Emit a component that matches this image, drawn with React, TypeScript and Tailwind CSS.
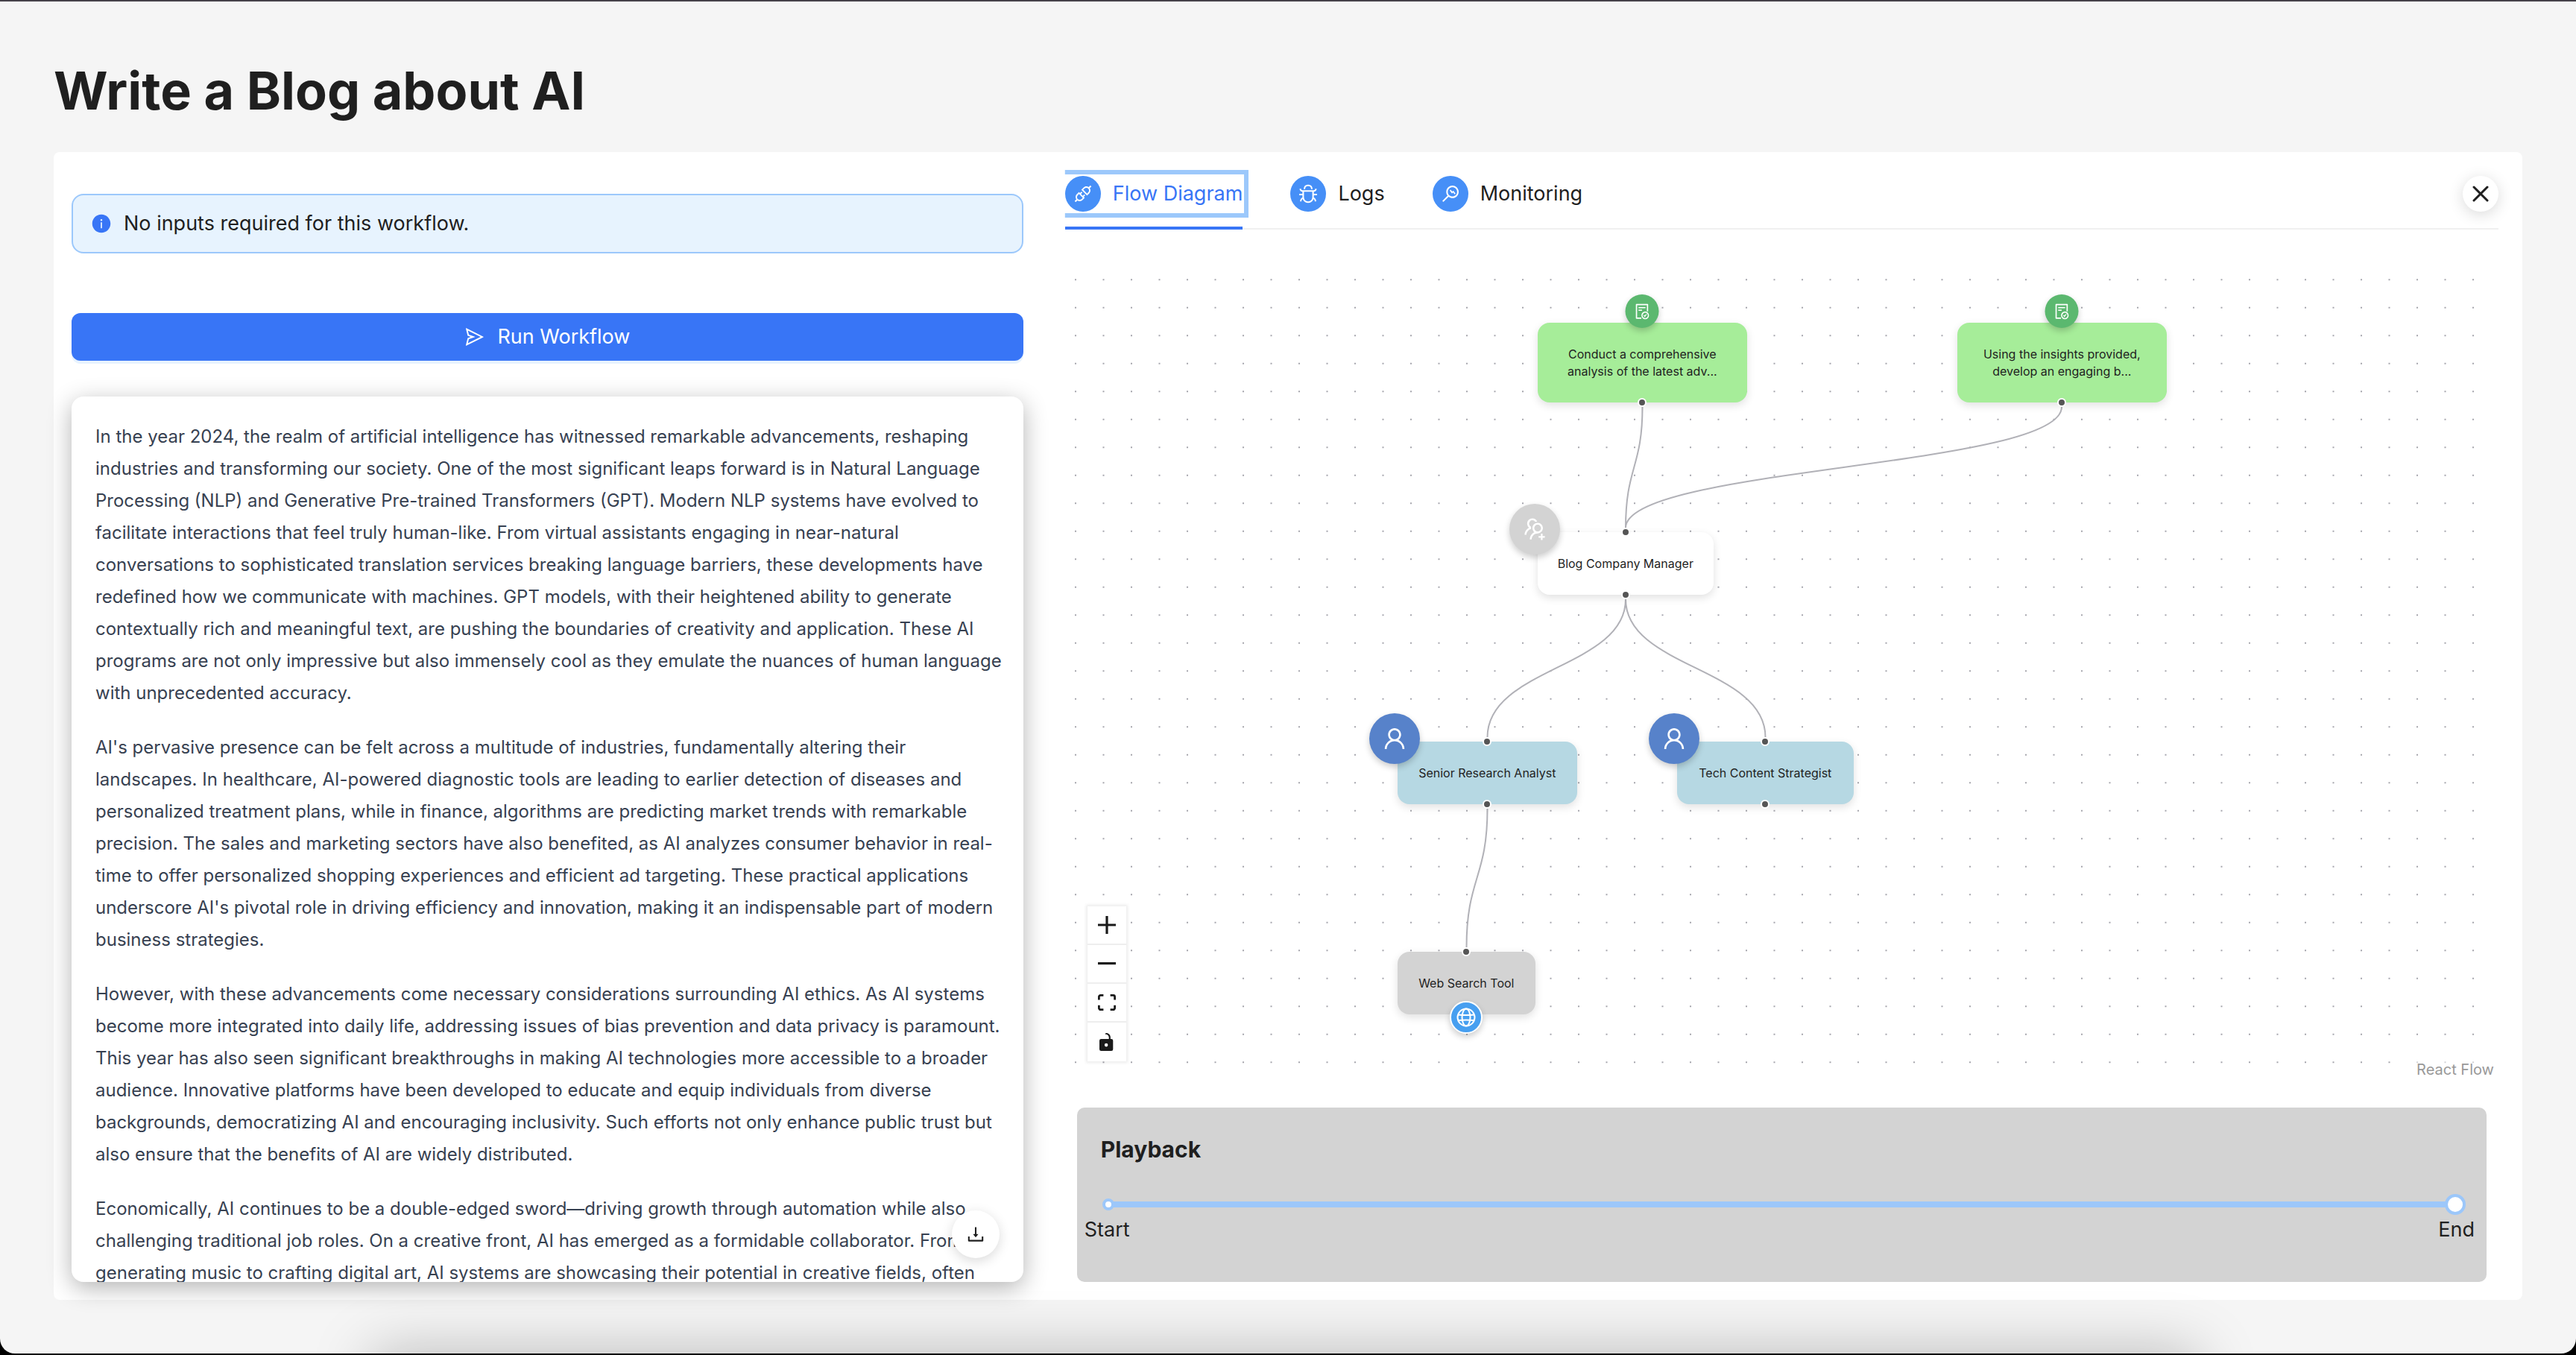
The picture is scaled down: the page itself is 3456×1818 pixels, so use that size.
import type { ComponentType, ReactNode } from "react";
import {
  AiFillInfoCircle,
  AiOutlineApi,
  AiOutlineBug,
  AiOutlineDownload,
  AiOutlineFileDone,
  AiOutlineMonitor,
  AiOutlineSend,
  AiOutlineUser,
  AiOutlineUsergroupAdd,
} from "react-icons/ai";

const paragraphs = [
  "In the year 2024, the realm of artificial intelligence has witnessed remarkable advancements, reshaping industries and transforming our society. One of the most significant leaps forward is in Natural Language Processing (NLP) and Generative Pre-trained Transformers (GPT). Modern NLP systems have evolved to facilitate interactions that feel truly human-like. From virtual assistants engaging in near-natural conversations to sophisticated translation services breaking language barriers, these developments have redefined how we communicate with machines. GPT models, with their heightened ability to generate contextually rich and meaningful text, are pushing the boundaries of creativity and application. These AI programs are not only impressive but also immensely cool as they emulate the nuances of human language with unprecedented accuracy.",
  "AI's pervasive presence can be felt across a multitude of industries, fundamentally altering their landscapes. In healthcare, AI-powered diagnostic tools are leading to earlier detection of diseases and personalized treatment plans, while in finance, algorithms are predicting market trends with remarkable precision. The sales and marketing sectors have also benefited, as AI analyzes consumer behavior in real-time to offer personalized shopping experiences and efficient ad targeting. These practical applications underscore AI's pivotal role in driving efficiency and innovation, making it an indispensable part of modern business strategies.",
  "However, with these advancements come necessary considerations surrounding AI ethics. As AI systems become more integrated into daily life, addressing issues of bias prevention and data privacy is paramount. This year has also seen significant breakthroughs in making AI technologies more accessible to a broader audience. Innovative platforms have been developed to educate and equip individuals from diverse backgrounds, democratizing AI and encouraging inclusivity. Such efforts not only enhance public trust but also ensure that the benefits of AI are widely distributed.",
  "Economically, AI continues to be a double-edged sword—driving growth through automation while also challenging traditional job roles. On a creative front, AI has emerged as a formidable collaborator. From generating music to crafting digital art, AI systems are showcasing their potential in creative fields, often",
];

type IconType = ComponentType<{ className?: string }>;

const tabs: { label: string; Icon: IconType; active: boolean }[] = [
  { label: "Flow Diagram", Icon: AiOutlineApi, active: true },
  { label: "Logs", Icon: AiOutlineBug, active: false },
  { label: "Monitoring", Icon: AiOutlineMonitor, active: false },
];

function Tab({ label, Icon, active }: { label: string; Icon: IconType; active: boolean }) {
  return (
    <button
      type="button"
      role="tab"
      aria-selected={active}
      className={
        active
          ? "relative flex items-center gap-4 text-[#3875f6] outline-[6px] outline-offset-2 outline-[#9cc8fb] after:absolute after:inset-x-0 after:-bottom-6 after:h-1 after:bg-[#3875f6]"
          : "relative flex items-center gap-4"
      }
    >
      <span className="flex size-12 items-center justify-center rounded-full bg-[#468ff7] text-white">
        <Icon className="size-7" />
      </span>
      {label}
    </button>
  );
}

function Handle({ className }: { className: string }) {
  return (
    <span
      className={`absolute left-1/2 size-3 -translate-x-1/2 rounded-full border-2 border-white bg-[#555] ${className}`}
    />
  );
}

function FlowNode({
  className,
  children,
  top,
  bottom,
}: {
  className: string;
  children: ReactNode;
  top?: boolean;
  bottom?: boolean;
}) {
  return (
    <div
      className={`absolute flex items-center justify-center rounded-2xl text-center text-[16px] leading-[23px] shadow-[0_4px_12px_rgba(0,0,0,0.12)] ${className}`}
    >
      {children}
      {top && <Handle className="-top-1.5" />}
      {bottom && <Handle className="-bottom-1.5" />}
    </div>
  );
}

const edges = [
  "M774.5 206 C774.5 287 752 287 752 368",
  "M1337 206 C1337 287 752 287 752 368",
  "M752 464 C752 556 566.5 556 566.5 649",
  "M752 464 C752 556 939.5 556 939.5 649",
  "M566.5 745 C566.5 838 538.5 838 538.5 931",
];

const badge = "absolute flex items-center justify-center rounded-full text-white shadow-[0_4px_8px_rgba(0,0,0,0.2)]";

function FlowCanvas() {
  return (
    <div className="relative mt-8 min-h-0 flex-1 overflow-hidden">
      <svg className="absolute inset-0 size-full" aria-hidden="true">
        <pattern id="dots" x="-4.75" y="16.5" width="37.5" height="37.5" patternUnits="userSpaceOnUse">
          <circle cx="18.75" cy="18.75" r="1.1" fill="#91919a" />
        </pattern>
        <rect width="100%" height="100%" fill="url(#dots)" />
        {edges.map((d) => (
          <path key={d} d={d} fill="none" stroke="#b1b1b7" strokeWidth="2" />
        ))}
      </svg>

      <FlowNode className="left-[634px] top-[93px] h-[107px] w-[281px] bg-[#a6ed99]" bottom>
        <span>
          Conduct a comprehensive
          <br />
          analysis of the latest adv...
        </span>
        <span className={`${badge} -top-[38px] left-1/2 size-[45px] -translate-x-1/2 bg-[#5bb86f]`}>
          <AiOutlineFileDone className="size-6" />
        </span>
      </FlowNode>
      <FlowNode className="left-[1197px] top-[93px] h-[107px] w-[281px] bg-[#a6ed99]" bottom>
        <span>
          Using the insights provided,
          <br />
          develop an engaging b...
        </span>
        <span className={`${badge} -top-[38px] left-1/2 size-[45px] -translate-x-1/2 bg-[#5bb86f]`}>
          <AiOutlineFileDone className="size-6" />
        </span>
      </FlowNode>

      <FlowNode className="left-[634px] top-[374px] h-[84px] w-[236px] bg-white" top bottom>
        Blog Company Manager
        <span className={`${badge} -left-[38px] -top-[38px] size-[68px] bg-[#d3d3d3]`}>
          <AiOutlineUsergroupAdd className="size-9" />
        </span>
      </FlowNode>

      <FlowNode className="left-[446px] top-[655px] h-[84px] w-[241px] bg-[#b6d8e3]" top bottom>
        Senior Research Analyst
        <span className={`${badge} -left-[38px] -top-[38px] size-[68px] bg-[#5782ca]`}>
          <AiOutlineUser className="size-9" />
        </span>
      </FlowNode>
      <FlowNode className="left-[821px] top-[655px] h-[84px] w-[237px] bg-[#b6d8e3]" top bottom>
        Tech Content Strategist
        <span className={`${badge} -left-[38px] -top-[38px] size-[68px] bg-[#5782ca]`}>
          <AiOutlineUser className="size-9" />
        </span>
      </FlowNode>

      <FlowNode className="left-[446px] top-[937px] h-[84px] w-[185px] bg-[#d3d3d3]" top>
        Web Search Tool
        <span className={`${badge} -bottom-[26px] left-1/2 size-11 -translate-x-1/2 border-2 border-white bg-[#479ff0]`}>
          <svg viewBox="0 0 26 26" className="size-[26px]" fill="none" stroke="currentColor" strokeWidth="2">
            <circle cx="13" cy="13" r="11.5" />
            <ellipse cx="13" cy="13" rx="5.5" ry="11.5" />
            <path d="M2 9.5Q13 10.5 24 9.5M2 17Q13 16 24 17" />
          </svg>
        </span>
      </FlowNode>

      <div className="absolute bottom-[30px] left-[30px] flex flex-col divide-y-2 divide-[#eee] bg-white shadow-[0_0_4px_2px_rgba(0,0,0,0.08)]">
        <button type="button" aria-label="Zoom in" className="flex size-13 items-center justify-center">
          <svg viewBox="0 0 32 32" className="size-6 fill-[#1a1a1a]">
            <path d="M32 18.133H18.133V32h-4.266V18.133H0v-4.266h13.867V0h4.266v13.867H32z" />
          </svg>
        </button>
        <button type="button" aria-label="Zoom out" className="flex size-13 items-center justify-center">
          <svg viewBox="0 0 32 5" className="w-6 fill-[#1a1a1a]">
            <path d="M0 0h32v4.2H0z" />
          </svg>
        </button>
        <button type="button" aria-label="Fit view" className="flex size-13 items-center justify-center">
          <svg viewBox="0 0 32 30" className="w-6 fill-[#1a1a1a]">
            <path d="M3.692 4.63c0-.53.4-.938.939-.938h5.215V0H4.708C2.13 0 0 2.054 0 4.63v5.216h3.692V4.631zM27.354 0h-5.2v3.692h5.17c.53 0 .984.4.984.939v5.215H32V4.631A4.624 4.624 0 0027.354 0zm.954 24.83c0 .532-.4.94-.939.94h-5.215v3.768h5.215c2.577 0 4.631-2.13 4.631-4.707v-5.139h-3.692v5.139zm-23.677.94c-.531 0-.939-.4-.939-.94v-5.138H0v5.139c0 2.577 2.13 4.707 4.708 4.707h5.138V25.77H4.631z" />
          </svg>
        </button>
        <button type="button" aria-label="Toggle interactivity" className="flex size-13 items-center justify-center">
          <svg viewBox="0 0 25 32" className="h-6 fill-[#1a1a1a]">
            <path d="M21.333 10.667H19.81V7.619C19.81 3.429 16.38 0 12.19 0c-4.114 1.828-1.37 2.133.305 2.438 1.676.305 4.42 2.59 4.42 5.181v3.048H3.047A3.056 3.056 0 000 13.714v15.238A3.056 3.056 0 003.048 32h18.285a3.056 3.056 0 003.048-3.048V13.714a3.056 3.056 0 00-3.048-3.047zM12.19 24.533a3.056 3.056 0 01-3.047-3.047 3.056 3.056 0 013.047-3.048 3.056 3.056 0 013.048 3.048 3.056 3.056 0 01-3.048 3.047z" />
          </svg>
        </button>
      </div>

      <a href="#react-flow" className="absolute bottom-0 right-0 bg-white/50 px-1.5 py-1 text-[20px] leading-[30px] text-[#999]">
        React Flow
      </a>
    </div>
  );
}

function Playback() {
  return (
    <section className="mx-4 mt-8 flex h-[234px] flex-col rounded-[10px] bg-[#d3d3d3] pt-9">
      <h2 className="px-8 text-[30px] font-bold leading-[40px]">Playback</h2>
      <div className="relative mx-[42px] mt-[50px] h-2 bg-[#9cc7fa]">
        <span className="absolute -left-2 -top-1 size-4 rounded-full border-4 border-[#9cc7fa] bg-white" />
        <input
          type="range"
          aria-label="Playback position"
          min={0}
          max={1}
          defaultValue={1}
          className="absolute -inset-x-[14px] -top-[10px] h-7 w-[calc(100%+28px)] appearance-none bg-transparent [&::-webkit-slider-thumb]:size-7 [&::-webkit-slider-thumb]:appearance-none [&::-webkit-slider-thumb]:rounded-full [&::-webkit-slider-thumb]:border-4 [&::-webkit-slider-thumb]:border-[#9cc7fa] [&::-webkit-slider-thumb]:bg-white"
        />
      </div>
      <div className="mt-3 flex justify-between pl-2.5 pr-4 leading-[36px]">
        <span>Start</span>
        <span>End</span>
      </div>
    </section>
  );
}

export default function App() {
  return (
    <div className="h-screen bg-black font-['Inter',sans-serif] text-[27px] text-[#1f1f1f]">
      <div className="relative flex h-[calc(100%-2px)] flex-col overflow-hidden rounded-b-[20px] border-t-2 border-[#454149] bg-[#f5f5f5] px-18 pb-18 pt-16">
        <h1 className="mb-[26px] text-[70px] font-bold leading-[112px]">Write a Blog about AI</h1>

        <main className="flex min-h-0 flex-1 rounded-lg bg-white">
          <section className="flex w-2/5 flex-col px-6 pb-6 pt-14">
            <div
              role="alert"
              className="flex h-20 items-center gap-4 rounded-2xl border-2 border-[#9cc8fb] bg-[#e7f3fe] px-6"
            >
              <AiFillInfoCircle className="size-7 text-[#3875f6]" />
              No inputs required for this workflow.
            </div>
            <button
              type="button"
              className="mt-20 flex h-16 items-center justify-center gap-4 rounded-xl bg-[#3875f6] text-white shadow-[0_4px_0_#e8f3fe]"
            >
              <AiOutlineSend className="size-7" />
              Run Workflow
            </button>
            <div className="relative mt-12 min-h-0 flex-1 overflow-hidden rounded-2xl shadow-[0_8px_32px_rgba(0,0,0,0.3)]">
              <div className="flex h-full flex-col gap-[30px] overflow-hidden py-8 pl-8 pr-6 text-[24px] leading-[43px] text-[#374151]">
                {paragraphs.map((text) => (
                  <p key={text.slice(0, 16)} className="shrink-0">
                    {text}
                  </p>
                ))}
              </div>
              <button
                type="button"
                aria-label="Download"
                className="absolute bottom-8 right-8 flex size-16 items-center justify-center rounded-full bg-white text-[#1f1f1f] shadow-[0_4px_16px_rgba(0,0,0,0.15)]"
              >
                <AiOutlineDownload className="size-7" />
              </button>
            </div>
          </section>

          <section className="flex w-3/5 flex-col px-8 pb-6">
            <div className="flex items-center border-b-2 border-[#f0f0f0] pb-[22px] pt-8">
              <div role="tablist" className="flex gap-16 [clip-path:inset(-20px_-20px_-24px_0)]">
                {tabs.map((tab) => (
                  <Tab key={tab.label} {...tab} />
                ))}
              </div>
              <button
                type="button"
                aria-label="Close"
                className="ml-auto flex size-12 items-center justify-center rounded-full bg-white shadow-[0_4px_20px_rgba(0,0,0,0.15)]"
              >
                <svg viewBox="0 0 24 24" className="size-6" fill="none" stroke="#1f1f1f" strokeWidth="3" strokeLinecap="round">
                  <path d="M3 3L21 21M21 3L3 21" />
                </svg>
              </button>
            </div>
            <FlowCanvas />
            <Playback />
          </section>
        </main>

        <div className="pointer-events-none absolute inset-x-0 bottom-0 flex h-30 items-end overflow-hidden pl-[620px] pr-[628px]">
          <div className="h-px w-full translate-y-[120px] rounded-[40px] shadow-[0_0_80px_120px_rgba(0,0,0,0.25)]" />
        </div>
      </div>
    </div>
  );
}
